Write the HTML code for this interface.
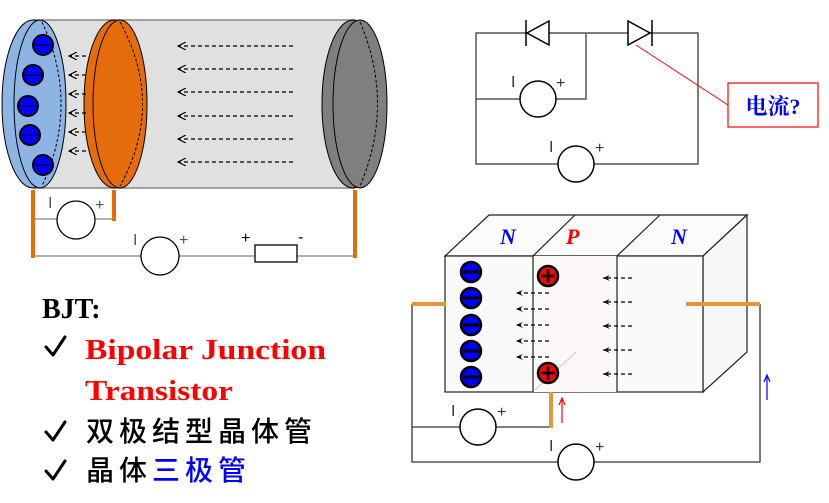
<!DOCTYPE html>
<html><head><meta charset="utf-8"><style>html,body{margin:0;padding:0;background:#fff;width:829px;height:503px;overflow:hidden}</style></head>
<body>
<svg width="829" height="503" viewBox="0 0 829 503" xmlns="http://www.w3.org/2000/svg">
<defs>
<marker id="ah" markerWidth="8" markerHeight="6" refX="7" refY="3" orient="auto" markerUnits="userSpaceOnUse"><path d="M0,0 L7,3 L0,6 L3,3Z" fill="#000"/></marker>
<marker id="ah2" markerWidth="9" markerHeight="8" refX="8" refY="4" orient="auto" markerUnits="userSpaceOnUse"><path d="M0,0 L8,4 L0,8" fill="none" stroke="#000" stroke-width="1.2"/></marker>
</defs>
<!-- cylinder -->
<rect x="33" y="20" width="322" height="168" fill="#e0e0e0"/>
<line x1="33" y1="20" x2="355" y2="20" stroke="#888" stroke-width="1.5"/>
<line x1="33" y1="188" x2="355" y2="188" stroke="#888" stroke-width="1.5"/>
<ellipse cx="33" cy="104" rx="31" ry="84" fill="#8eb4e3" stroke="#000" stroke-width="1"/>
<ellipse cx="40" cy="104" rx="26" ry="84" fill="#8eb4e3" stroke="#000" stroke-width="1"/>
<path d="M42,22 Q80,104 42,186" fill="none" stroke="#000" stroke-dasharray="3,2"/>
<ellipse cx="114" cy="104" rx="30" ry="84" fill="#e46c0a" stroke="#000" stroke-width="1"/>
<ellipse cx="120" cy="104" rx="27" ry="84" fill="#e46c0a" stroke="#000" stroke-width="1"/>
<path d="M120,22 Q165,104 120,186" fill="none" stroke="#000" stroke-dasharray="3,2"/>
<ellipse cx="353" cy="104" rx="31" ry="84" fill="#7f7f7f" stroke="#000" stroke-width="1"/>
<ellipse cx="360" cy="104" rx="27" ry="84" fill="#7f7f7f" stroke="#000" stroke-width="1"/>
<path d="M360,22 Q395,104 360,186" fill="none" stroke="#000" stroke-dasharray="3,2"/>
<g fill="#0000ff" stroke="#000" stroke-width="2">
<circle cx="43" cy="45" r="10"/><circle cx="33" cy="75" r="10"/><circle cx="28" cy="106" r="10"/><circle cx="30" cy="135" r="10"/><circle cx="43" cy="165" r="10"/></g>
<g stroke="#000" stroke-width="1"><line x1="34" y1="45" x2="52" y2="45"/><line x1="24" y1="75" x2="42" y2="75"/><line x1="19" y1="106" x2="37" y2="106"/><line x1="21" y1="135" x2="39" y2="135"/><line x1="34" y1="165" x2="52" y2="165"/></g>
<g stroke="#000" stroke-width="1.2" stroke-dasharray="4,3" marker-end="url(#ah2)">
<line x1="86" y1="56" x2="69" y2="56"/><line x1="86" y1="75" x2="69" y2="75"/><line x1="86" y1="94" x2="69" y2="94"/><line x1="86" y1="113" x2="69" y2="113"/><line x1="86" y1="132" x2="69" y2="132"/><line x1="86" y1="151" x2="69" y2="151"/>
<line x1="293" y1="46" x2="178" y2="46"/><line x1="293" y1="69" x2="178" y2="69"/><line x1="293" y1="92" x2="178" y2="92"/><line x1="293" y1="116" x2="178" y2="116"/><line x1="293" y1="139" x2="178" y2="139"/><line x1="293" y1="162" x2="178" y2="162"/>
</g>
<!-- left circuit -->
<g stroke="#999" stroke-width="1.5" fill="none"><line x1="35" y1="219" x2="114" y2="219"/><line x1="33" y1="256" x2="355" y2="256"/></g>
<g stroke="#e46c0a" stroke-width="4"><line x1="33" y1="190" x2="33" y2="258"/><line x1="114" y1="190" x2="114" y2="221"/><line x1="355" y1="190" x2="355" y2="258"/></g>
<g fill="#fff" stroke="#000" stroke-width="1.3"><circle cx="76" cy="220" r="19"/><circle cx="160" cy="256" r="19"/><rect x="255" y="245" width="42" height="17"/></g>
<g font-family="Liberation Sans,sans-serif" font-size="16" fill="#555"><text x="48" y="208">I</text><text x="95" y="210">+</text><text x="133" y="245">I</text><text x="179" y="245">+</text><text x="241" y="243" fill="#000">+</text><text x="298" y="242" fill="#000">-</text></g>
<!-- diode circuit -->
<g stroke="#555" stroke-width="1.5" fill="none"><path d="M476,33 H698 V164 H476 Z"/><path d="M586,33 V99 H476"/></g>
<g stroke="#000" stroke-width="1.5" fill="#fff"><path d="M549,21 L549,45 L527,33 Z"/><line x1="526" y1="20" x2="526" y2="46"/><path d="M628,21 L628,45 L650,33 Z"/><line x1="652" y1="20" x2="652" y2="46"/>
<circle cx="538" cy="99" r="18"/><circle cx="576" cy="164" r="18"/></g>
<g font-family="Liberation Sans,sans-serif" font-size="16" fill="#333"><text x="511" y="87">I</text><text x="556" y="88">+</text><text x="549" y="152">I</text><text x="595" y="153">+</text></g>
<line x1="636" y1="45" x2="728" y2="105" stroke="#f00" stroke-width="1"/>
<rect x="728" y="83" width="90" height="44" fill="#fff" stroke="#f00" stroke-width="1.2"/>
<text x="773" y="114" text-anchor="middle" font-family="Liberation Serif,Noto Serif CJK SC,serif" font-weight="bold" font-size="22" fill="#00f">电流?</text>
<!-- NPN block -->
<path d="M445,256 L489,215 H747 L703,256 Z" fill="#fbfbfb" stroke="#222" stroke-width="1.2"/>
<path d="M703,256 L747,215 V352 L703,392 Z" fill="#f7f7f7" stroke="#222" stroke-width="1.2"/>
<rect x="445" y="256" width="258" height="136" fill="#fafafa" stroke="#222" stroke-width="1.2"/>
<rect x="533" y="256" width="84" height="136" fill="#fdf9f9"/>
<g stroke="#222" stroke-width="1.2"><line x1="533" y1="256" x2="533" y2="392"/><line x1="617" y1="256" x2="617" y2="392"/><line x1="533" y1="256" x2="575" y2="215"/><line x1="617" y1="256" x2="660" y2="215"/></g>
<line x1="535" y1="390" x2="576" y2="352" stroke="#bbb" stroke-width="0.8"/>
<g font-family="Liberation Serif,serif" font-weight="bold" font-style="italic" font-size="22"><text x="500" y="244" fill="#00f">N</text><text x="566" y="244" fill="#f00">P</text><text x="671" y="244" fill="#00f">N</text></g>
<g fill="#0000ff" stroke="#000" stroke-width="2.5"><circle cx="471" cy="272" r="10"/><circle cx="471" cy="298" r="10"/><circle cx="471" cy="325" r="10"/><circle cx="471" cy="351" r="10"/><circle cx="471" cy="377" r="10"/></g>
<g stroke="#000" stroke-width="3"><line x1="463" y1="272" x2="479" y2="272"/><line x1="463" y1="298" x2="479" y2="298"/><line x1="463" y1="325" x2="479" y2="325"/><line x1="463" y1="351" x2="479" y2="351"/><line x1="463" y1="377" x2="479" y2="377"/></g>
<g fill="#f00" stroke="#000" stroke-width="2.5"><circle cx="548" cy="276" r="10"/><circle cx="548" cy="373" r="10"/></g>
<g stroke="#000" stroke-width="2.5"><path d="M541,276 H555 M548,269 V283 M541,373 H555 M548,366 V380"/></g>
<g stroke="#000" stroke-width="1.2" stroke-dasharray="4,3" marker-end="url(#ah)">
<line x1="549" y1="293" x2="516" y2="293"/><line x1="549" y1="309" x2="516" y2="309"/><line x1="549" y1="325" x2="516" y2="325"/><line x1="549" y1="341" x2="516" y2="341"/><line x1="549" y1="357" x2="516" y2="357"/>
<line x1="632" y1="278" x2="603" y2="278"/><line x1="632" y1="302" x2="603" y2="302"/><line x1="632" y1="326" x2="603" y2="326"/><line x1="632" y1="350" x2="603" y2="350"/><line x1="632" y1="374" x2="603" y2="374"/>
</g>
<g stroke="#333" stroke-width="1.3" fill="none"><path d="M412,304 V462 H760 V304"/><line x1="412" y1="427" x2="551" y2="427"/></g>
<g stroke="#e8963a" stroke-width="4"><line x1="412" y1="304" x2="446" y2="304"/><line x1="686" y1="304" x2="760" y2="304"/><line x1="551" y1="392" x2="551" y2="428"/></g>
<g stroke="#000" stroke-width="1.5" fill="#fff"><circle cx="478" cy="427" r="18"/><circle cx="576" cy="462" r="18"/></g>
<g font-family="Liberation Sans,sans-serif" font-size="16" fill="#333"><text x="451" y="416">I</text><text x="497" y="417">+</text><text x="549" y="451">I</text><text x="595" y="452">+</text></g>
<g stroke-width="1.2"><line x1="562" y1="423" x2="562" y2="400" stroke="#f00"/><path d="M559,405 L562,398 L565,405" fill="none" stroke="#f00"/>
<line x1="767" y1="400" x2="767" y2="377" stroke="#00f"/><path d="M764,382 L767,375 L770,382" fill="none" stroke="#00f"/></g>
<!-- text -->
<text x="42" y="318" font-family="Liberation Serif,Noto Serif CJK SC,serif" font-weight="bold" font-size="28" fill="#000">BJT:</text>
<g fill="none" stroke="#000" stroke-width="3" stroke-linecap="round" stroke-linejoin="round">
<path d="M46,347 L53,355 L65,337"/><path d="M46,432 L53,440 L65,422"/><path d="M46,471 L53,479 L65,461"/></g>
<g font-family="Liberation Serif,serif" font-weight="bold" font-size="29" fill="#f00"><text x="85" y="359" textLength="241" lengthAdjust="spacingAndGlyphs">Bipolar Junction</text><text x="85" y="400" textLength="148" lengthAdjust="spacingAndGlyphs">Transistor</text></g>
<text x="86" y="441" font-family="Noto Sans CJK SC,sans-serif" font-weight="500" font-size="28" fill="#000" letter-spacing="5">双极结型晶体管</text>
<text x="86" y="480" font-family="Noto Sans CJK SC,sans-serif" font-weight="500" font-size="28" fill="#000" letter-spacing="5">晶体<tspan fill="#00f">三极管</tspan></text>
</svg>
</body></html>
